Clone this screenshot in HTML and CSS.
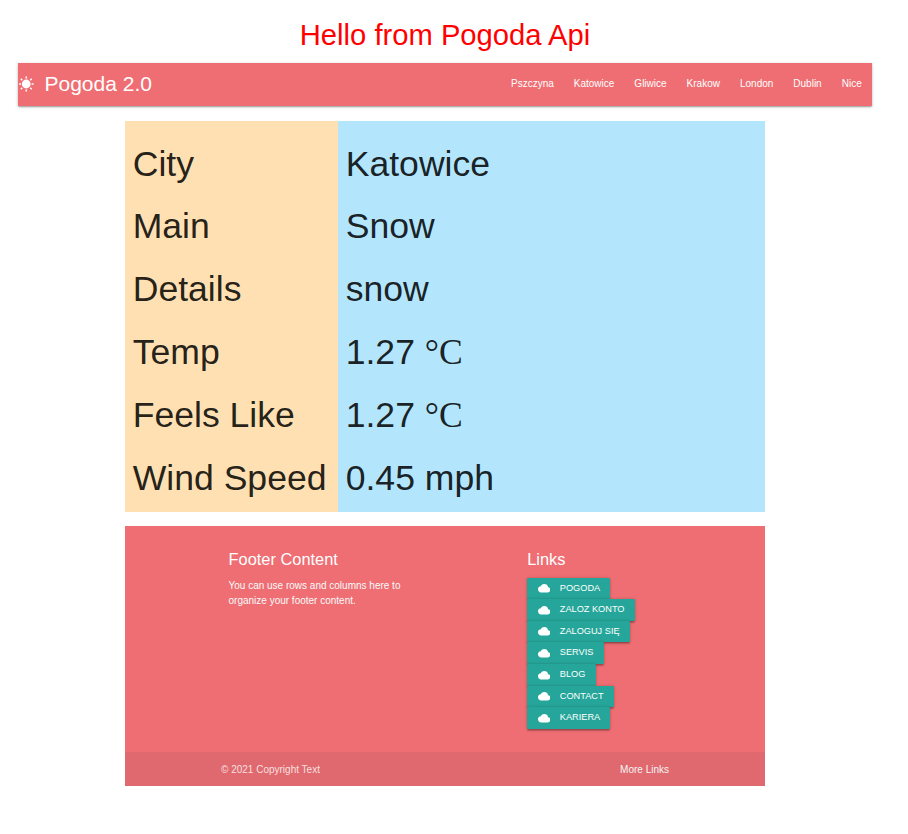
FILE: index.html
```html
<!DOCTYPE html>
<html lang="en">
<head>
<meta charset="utf-8">
<title>Pogoda Api</title>
<link rel="stylesheet" href="styles.css">
</head>
<body>
<svg class="defs" width="0" height="0"><symbol id="cloud" viewBox="0 0 24 24"><path d="M19.35 10.04A7.49 7.49 0 0 0 12 4C9.11 4 6.6 5.64 5.35 8.04A5.994 5.994 0 0 0 0 14c0 3.31 2.69 6 6 6h13c2.76 0 5-2.24 5-5 0-2.64-2.05-4.78-4.65-4.96z"/></symbol></svg>
<h1 class="title">Hello from Pogoda Api</h1>
<nav class="nav">
  <a class="brand"><svg class="sun" viewBox="0 0 16 16"><circle cx="8.2" cy="8" r="4.4"/><path d="M7.5 .5h1.6v2H7.5zM7.5 13.5h1.6v2H7.5zM1 7.3h2v1.4H1zM13.6 7.3h2v1.4h-2zM2.3 3.2l1-1 1.5 1.5-1 1zM11.7 3.7l1.5-1.5 1 1-1.5 1.5zM2.3 12.8l1.5-1.5 1 1-1.5 1.5zM11.7 12.3l1-1 1.5 1.5-1 1z"/></svg>Pogoda 2.0</a>
  <ul class="cities"><li>Pszczyna</li><li>Katowice</li><li>Gliwice</li><li>Krakow</li><li>London</li><li>Dublin</li><li>Nice</li></ul>
</nav>
<main class="weather">
  <div class="labels"><h2>City</h2><h2>Main</h2><h2>Details</h2><h2>Temp</h2><h2>Feels Like</h2><h2>Wind Speed</h2></div>
  <div class="values"><h2>Katowice</h2><h2>Snow</h2><h2>snow</h2><h2>1.27 <span class="unit">°C</span></h2><h2>1.27 <span class="unit">°C</span></h2><h2>0.45 mph</h2></div>
</main>
<footer class="footer">
  <div class="footer-row">
    <div class="about"><h5>Footer Content</h5><p>You can use rows and columns here to organize your footer content.</p></div>
    <div class="links"><h5>Links</h5>
      <ul>
        <li><a class="btn"><svg><use href="#cloud"/></svg>POGODA</a></li>
        <li><a class="btn"><svg><use href="#cloud"/></svg>ZALOZ KONTO</a></li>
        <li><a class="btn"><svg><use href="#cloud"/></svg>ZALOGUJ SIĘ</a></li>
        <li><a class="btn"><svg><use href="#cloud"/></svg>SERVIS</a></li>
        <li><a class="btn"><svg><use href="#cloud"/></svg>BLOG</a></li>
        <li><a class="btn"><svg><use href="#cloud"/></svg>CONTACT</a></li>
        <li><a class="btn"><svg><use href="#cloud"/></svg>KARIERA</a></li>
      </ul>
    </div>
  </div>
  <div class="copyright"><span>© 2021 Copyright Text</span><a>More Links</a></div>
</footer>
</body>
</html>
```
FILE: styles.css
```css
* { box-sizing: border-box; }
html { font-size: 10px; background: #fff; }
body { margin: 0; padding: 19px 36px 0 18px; font: 10px/15px "Liberation Sans", Arial, sans-serif; color: rgba(0,0,0,.87); }
.defs { display: none; }
h1, h2, h5 { font-weight: 400; line-height: 110%; }
ul { list-style: none; margin: 0; padding: 0; }
.title { margin: 0 0 12px; font-size: 2.92rem; color: #f00; text-align: center; }
.nav { display: flex; justify-content: space-between; height: 42.67px; line-height: 42.67px; background: #ee6e73; color: #fff;
  box-shadow: 0 1.33px 1.33px 0 rgba(0,0,0,.14), 0 2px .67px -1.33px rgba(0,0,0,.12), 0 .67px 3.33px 0 rgba(0,0,0,.2); }
.brand { display: flex; align-items: center; font-size: 2.1rem; }
.sun { width: 16px; height: 16px; margin-right: 10.5px; fill: #fff; }
.cities { display: flex; }
.cities li { padding: 0 10px; }
.cities li:last-child { padding-right: 10.3px; }
.weather { display: flex; width: 640px; margin: 15px auto 14px; }
.weather h2 { margin: 2.3733rem 0 1.424rem; font-size: 3.56rem; }
.labels, .values { padding: 0 7.7px; display: flow-root; white-space: nowrap; }
.labels { width: 213px; background: #ffe0b2; }
.values { width: 427px; background: #b3e5fc; }
.unit { font-family: "Liberation Serif", serif; }
.unit::first-letter { font-size: 1.1em; }
.footer { width: 640px; margin: 0 auto; background: #ee6e73; color: #fff; }
.footer-row { display: flex; justify-content: space-between; width: 448px; height: 226px; margin: 0 auto; padding-top: 12.33px; }
.about { width: 224px; padding: 0 7.5px; }
.links { width: 149.33px; padding: 0 7.5px; }
.footer h5 { margin: 1.0933rem 0 .656rem; font-size: 1.64rem; }
.about p { margin: 0; padding-top: 4px; padding-right: 20px; color: #fafafa; }
.links ul { padding-top: 3.6px; }
.links li { height: 21.6px; }
.btn { display: inline-flex; align-items: center; height: 21.6px; padding: 0 10.3px 0 10.67px; border-radius: 1.33px; background: #26a69a; font-size: 9.2px; line-height: 21.6px; white-space: nowrap; vertical-align: top;
  box-shadow: 0 1.33px 1.33px 0 rgba(0,0,0,.14), 0 2px .67px -1.33px rgba(0,0,0,.12), 0 .67px 3.33px 0 rgba(0,0,0,.2); }
.btn svg { width: 12.5px; height: 12.5px; margin-right: 9.5px; fill: #fff; }
.copyright { display: flex; justify-content: space-between; align-items: center; height: 34px; padding: 0 96px; background: rgba(51,51,51,.08); color: rgba(255,255,255,.8); }
.copyright a { color: #f5f5f5; }
```
